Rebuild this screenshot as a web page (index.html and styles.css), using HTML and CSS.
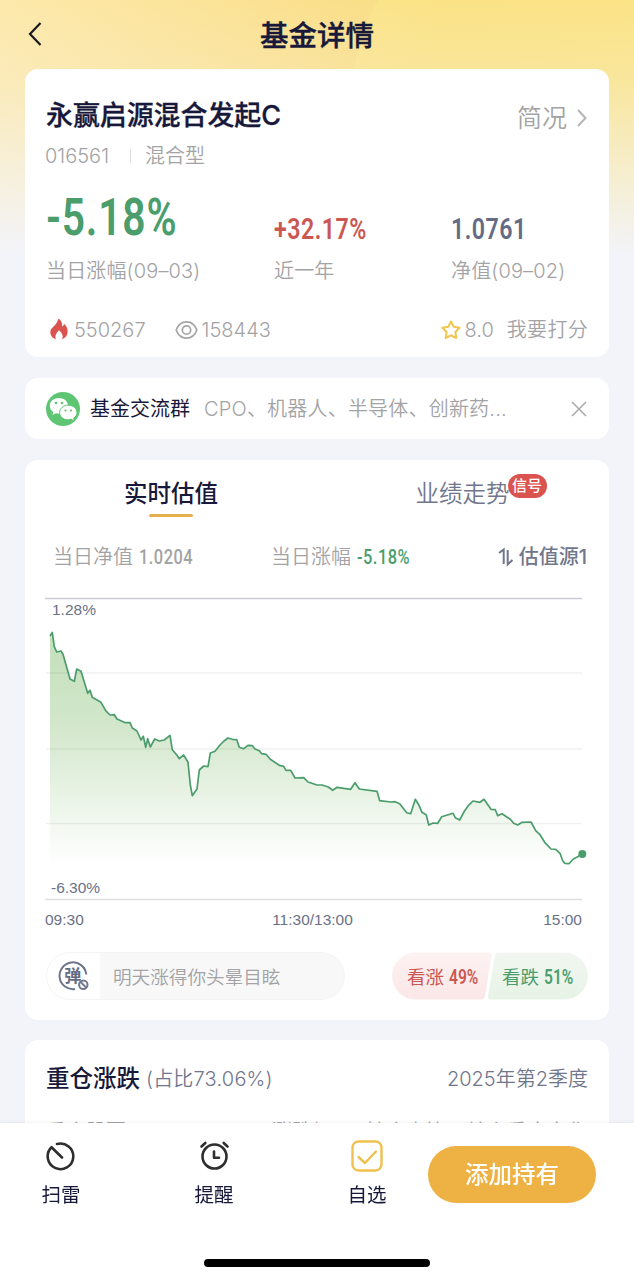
FILE: index.html
```html
<!DOCTYPE html>
<html lang="zh-CN">
<head>
    <meta charset="UTF-8">
    <meta name="viewport" content="width=device-width, initial-scale=1.0">
    <title>基金详情</title>
    <link rel="stylesheet" href="styles.css">
</head>
<body>
<div class="page">
    <header class="header">
        <svg class="back" width="16" height="26" viewBox="0 0 16 26"><path d="M13.5 2 L3 13 L13.5 24"/></svg>
        <h1>基金详情</h1>
    </header>

    <main>
        <section class="card summary">
            <div class="row title-row">
                <h2>永赢启源混合发起C</h2>
                <a class="more">简况
                    <svg width="12" height="20" viewBox="0 0 12 20"><path d="M2 2 L9.5 10 L2 18"/></svg>
                </a>
            </div>
            <div class="meta"><span>016561</span><i></i><span>混合型</span></div>
            <div class="figures">
                <div><strong class="num big green">-5.18%</strong><p>当日涨幅(09–03)</p></div>
                <div><strong class="num red">+32.17%</strong><p>近一年</p></div>
                <div><strong class="num slate">1.0761</strong><p>净值(09–02)</p></div>
            </div>
            <div class="row stats">
                <svg class="fire" width="20" height="22" viewBox="0 0 20 22"><path d="M9.5 0.5 C13 3 13.4 6 13 8.5 C14.4 8 15 7 15 5.8 C18 8.5 19 11.5 18.6 14.5 C18.1 18 16 20.3 13 21.3 C14.6 18.5 13.6 15.5 10 12.3 C7 15.5 5.5 18.5 7 21.3 C3.5 20.2 1.3 17.5 1.3 14 C1.3 9.5 7.5 8 9.5 0.5 Z"/></svg>
                <span class="hot">550267</span>
                <svg class="eye" width="23" height="20" viewBox="0 0 23 20"><path d="M1.2 10 C5 -0.8 18 -0.8 21.8 10 C18 20.8 5 20.8 1.2 10 Z"/><circle cx="11.5" cy="10" r="4.2"/></svg>
                <span>158443</span>
                <svg class="star" width="20" height="20" viewBox="0 0 20 20"><path d="M10 1.5 L12.7 6.8 L18.6 7.8 L14.4 12 L15.3 18 L10 15.3 L4.7 18 L5.6 12 L1.4 7.8 L7.3 6.8 Z"/></svg>
                <span class="score">8.0</span>
                <span class="rate">我要打分</span>
            </div>
        </section>

        <section class="card group">
            <svg class="wechat" width="34" height="34" viewBox="0 0 34 34">
                <circle class="disc" cx="17" cy="17" r="17"/>
                <path class="bubble" d="M13 6 C7.5 6 3.8 9.6 3.8 13.8 C3.8 16.5 5.2 18.7 7.3 20 L6.5 23 L10 21.3 C18 23 22 18.5 22 13.8 C22 9.6 18.3 6 13 6 Z"/>
                <path class="bubble front" d="M22.3 13.2 C17.2 13.2 13.6 16.5 13.6 20.6 C13.6 25.5 18.5 29 25 27.3 L28.3 29 L27.6 26.1 C29.8 24.8 31 22.9 31 20.6 C31 16.5 27.5 13.2 22.3 13.2 Z"/>
                <g class="disc"><circle cx="10" cy="11" r="1.3"/><circle cx="16" cy="11" r="1.3"/><circle cx="19.5" cy="18.5" r="1.1"/><circle cx="25" cy="18.5" r="1.1"/></g>
            </svg>
            <b>基金交流群</b>
            <span>CPO、机器人、半导体、创新药...</span>
            <svg class="close" width="18" height="18" viewBox="0 0 18 18"><path d="M2 2 L16 16 M16 2 L2 16"/></svg>
        </section>

        <section class="card valuation">
            <div class="tabs">
                <div class="tab active">实时估值</div>
                <div class="tab">业绩走势<em>信号</em></div>
            </div>
            <div class="quote">
                <span>当日净值 <b class="num small">1.0204</b></span>
                <span>当日涨幅 <b class="num small green">-5.18%</b></span>
                <span class="source">
                    <svg width="16" height="20" viewBox="0 0 16 20"><path d="M1 6 L5.7 2.5 V17 M9.7 3 V17.5 L14.5 13"/></svg>
                    估值源1
                </span>
            </div>
            <svg class="chart" width="543" height="340" viewBox="46 590 543 340">
                <defs>
                    <linearGradient id="fade" x1="0" y1="632" x2="0" y2="864" gradientUnits="userSpaceOnUse">
                        <stop offset="0" stop-color="#c3dfba"/>
                        <stop offset="0.4" stop-color="#d2e7cb"/>
                        <stop offset="1" stop-color="#ffffff"/>
                    </linearGradient>
                </defs>
                <path class="area" d="M50 864 L50 636 L52.3 632.5 L54.3 646.7 L56.7 652 L61 651 L63 654.3 L70 679 L74.3 681.3 L76.7 669 L81 671.3 L87.7 693.3 L90 690.3 L92.3 697.3 L101 702.3 L105.7 710.7 L110 715 L114.3 714.7 L117 719 L125.3 722.7 L130 722.7 L132.3 728 L137 731 L141 740 L143.3 736.3 L145.7 747.3 L147.7 738.7 L150.3 747 L154.7 739 L159.3 741 L164.3 740 L170 735.3 L172.3 749.7 L177 755.3 L179.3 758.7 L183.7 755 L188 762.3 L190.3 785 L192.3 795.7 L197 789 L199.3 770 L203.7 766 L208 766.7 L210.3 753 L215 751.3 L220 745 L224 741 L228 738 L232.3 739.3 L236.7 739.7 L239.3 747.3 L243.7 748.7 L248 745.3 L252.3 745.7 L255 749 L259.3 750.7 L261.7 753.7 L266 754.3 L270.3 759.3 L279.3 765.3 L283.7 766.3 L286 770.3 L290.7 770.3 L295 778 L303.7 777.7 L308 782 L317 785 L322 785 L328.3 787 L332.7 790.3 L337 787.3 L350.7 789.3 L355 782.7 L359.3 789 L377 791.3 L379.7 800.7 L390.7 802 L395 801.7 L399.7 803.7 L406.7 812.7 L410.7 813.7 L415.3 799.3 L419 805.3 L422 812.3 L426.3 815 L428.7 825 L433 823 L437.7 823.3 L441.7 816.7 L453 813.3 L455.3 817.7 L459.7 820 L464.3 811.3 L468.3 805.7 L473 801 L480 802.3 L484 799.3 L491 809.3 L495.3 809.7 L497.7 815.7 L502 813.7 L510.3 819.3 L513.7 823.3 L517.7 825 L522 822.3 L531 822 L535.7 830.7 L539.7 834.3 L544.7 842.3 L551 849 L555.7 849.3 L560 853.3 L562.7 860.7 L564.7 863.3 Z"/>
                <g class="grid"><path d="M46 673 H582 M46 749 H582 M46 823.5 H582"/></g>
                <path class="edge top" d="M45 598.5 H582"/>
                <path class="edge" d="M45 899.5 H582"/>
                <polyline class="line" points="50,636 52.3,632.5 54.3,646.7 56.7,652 61,651 63,654.3 70,679 74.3,681.3 76.7,669 81,671.3 87.7,693.3 90,690.3 92.3,697.3 101,702.3 105.7,710.7 110,715 114.3,714.7 117,719 125.3,722.7 130,722.7 132.3,728 137,731 141,740 143.3,736.3 145.7,747.3 147.7,738.7 150.3,747 154.7,739 159.3,741 164.3,740 170,735.3 172.3,749.7 177,755.3 179.3,758.7 183.7,755 188,762.3 190.3,785 192.3,795.7 197,789 199.3,770 203.7,766 208,766.7 210.3,753 215,751.3 220,745 224,741 228,738 232.3,739.3 236.7,739.7 239.3,747.3 243.7,748.7 248,745.3 252.3,745.7 255,749 259.3,750.7 261.7,753.7 266,754.3 270.3,759.3 279.3,765.3 283.7,766.3 286,770.3 290.7,770.3 295,778 303.7,777.7 308,782 317,785 322,785 328.3,787 332.7,790.3 337,787.3 350.7,789.3 355,782.7 359.3,789 377,791.3 379.7,800.7 390.7,802 395,801.7 399.7,803.7 406.7,812.7 410.7,813.7 415.3,799.3 419,805.3 422,812.3 426.3,815 428.7,825 433,823 437.7,823.3 441.7,816.7 453,813.3 455.3,817.7 459.7,820 464.3,811.3 468.3,805.7 473,801 480,802.3 484,799.3 491,809.3 495.3,809.7 497.7,815.7 502,813.7 510.3,819.3 513.7,823.3 517.7,825 522,822.3 531,822 535.7,830.7 539.7,834.3 544.7,842.3 551,849 555.7,849.3 560,853.3 562.7,860.7 564.7,863.3 569,863.7 573,859.3 577.7,856.7 582.3,854"/>
                <circle class="dot" cx="582.3" cy="854" r="4"/>
                <text x="52" y="615">1.28%</text>
                <text x="51" y="893">-6.30%</text>
                <text x="45" y="925">09:30</text>
                <text x="312.5" y="925" text-anchor="middle">11:30/13:00</text>
                <text x="582" y="925" text-anchor="end">15:00</text>
            </svg>
            <div class="row vote-row">
                <div class="danmu">
                    <div class="switch">
                        <svg width="34" height="34" viewBox="0 0 34 34">
                            <path d="M29.3 15.5 A13.4 13.4 0 1 0 18 30"/>
                            <circle cx="26.3" cy="25.7" r="4.2"/>
                            <path d="M23.4 22.8 L29.2 28.6"/>
                            <text x="15.7" y="22.5" text-anchor="middle">弹</text>
                        </svg>
                    </div>
                    <span>明天涨得你头晕目眩</span>
                </div>
                <div class="vote">
                    <svg width="197" height="48" viewBox="0 0 197 48">
                        <defs>
                            <linearGradient id="up" x1="0" y1="0" x2="0" y2="1"><stop offset="0" stop-color="#fdf2f2"/><stop offset="1" stop-color="#fbe7e7"/></linearGradient>
                            <linearGradient id="down" x1="0" y1="0" x2="0" y2="1"><stop offset="0" stop-color="#f1f7f0"/><stop offset="1" stop-color="#e7f3e7"/></linearGradient>
                        </defs>
                        <path fill="url(#up)" d="M24.5 0.5 H98 Q101 0.5 100.5 3.5 L94 44 Q93.3 47.5 90 47.5 H24.5 A23.5 23.5 0 0 1 24.5 0.5 Z"/>
                        <path fill="url(#down)" d="M107 0.5 H173.5 A23.5 23.5 0 0 1 173.5 47.5 H100 Q96.5 47.5 97 44 L104 3.5 Q104.5 0.5 107 0.5 Z"/>
                    </svg>
                    <span class="up">看涨 <b class="num small">49%</b></span>
                    <span class="down">看跌 <b class="num small">51%</b></span>
                </div>
            </div>
        </section>

        <section class="card holdings">
            <div class="row">
                <h3>重仓涨跌</h3>
                <span class="ratio">(占比73.06%)</span>
                <span class="quarter">2025年第2季度</span>
            </div>
            <div class="columns"><span>重仓股票</span><span>涨跌幅</span><span>持仓占比</span><span>较上季度变化</span></div>
        </section>
    </main>

    <footer class="toolbar">
        <div class="tool">
            <svg width="32" height="32" viewBox="0 0 32 32"><path d="M12 4 A12.8 12.8 0 1 1 6.5 7.2 L17 17.5"/></svg>
            <span>扫雷</span>
        </div>
        <div class="tool">
            <svg width="32" height="32" viewBox="0 0 32 32"><circle cx="16.5" cy="16.5" r="12"/><path d="M16 11.5 V17.7 H21 M3.5 6.5 L7.3 3 M29.5 6.5 L25.7 3"/></svg>
            <span>提醒</span>
        </div>
        <div class="tool picked">
            <svg width="32" height="32" viewBox="0 0 32 32"><rect x="1.5" y="1.5" width="29" height="29" rx="6"/><path d="M7.5 17 L14 23 L25 11.5"/></svg>
            <span>自选</span>
        </div>
        <button type="button">添加持有</button>
        <div class="home-bar"></div>
    </footer>
</div>
</body>
</html>
```
FILE: styles.css
```css
* {
    box-sizing: border-box;
}

body {
    margin: 0;
    font-family: Inter, "Noto Sans CJK SC", sans-serif;
    font-size: 20px;
    font-weight: 350;
    line-height: 28px;
    color: #a3a3a5;
    background: #f3f4fa;
}

h1, h2, h3, p {
    margin: 0;
}

svg {
    display: block;
    flex: none;
    fill: none;
}

.page {
    height: 1280px;
    overflow: hidden;
    background: linear-gradient(to bottom, rgba(243, 244, 250, 0) 0, rgba(243, 244, 250, 0.2) 80px, rgba(243, 244, 250, 0.65) 180px, #f3f4fa 255px),
        radial-gradient(circle at 525px 90px, rgba(252, 234, 140, 0.45) 0, rgba(252, 234, 140, 0.45) 171px, rgba(252, 234, 140, 0) 173px),
        linear-gradient(100deg, #fde9ab 0%, #f9dc80 52%, #f9df80 100%);
}

.header {
    position: relative;
    height: 69px;
    padding-top: 17px;
    text-align: center;
}

.header h1 {
    font-size: 28.5px;
    line-height: 38px;
    font-weight: 500;
    color: #17183a;
    -webkit-text-stroke: 0.4px #17183a;
}

.back {
    position: absolute;
    left: 27px;
    top: 21px;
    stroke: #1a1a22;
    stroke-width: 2.2;
}

main {
    display: flex;
    flex-direction: column;
    gap: 21px;
    padding: 0 25px;
}

.card {
    background: #fff;
    border-radius: 13px;
    padding: 0 21px;
}

.row {
    display: flex;
    align-items: center;
}

.green {
    color: #4b9d6c;
}

.red {
    color: #cb5752;
}

.slate {
    color: #656b84;
}

/* narrow DIN-like digits */
.num {
    display: inline-block;
    font-family: Roboto, sans-serif;
    font-size: 29px;
    font-weight: 600;
    line-height: 34px;
    letter-spacing: 0.6px;
    transform: scaleX(0.8);
    transform-origin: left center;
}

.num.big {
    font-size: 51px;
    line-height: 50px;
    letter-spacing: 1px;
}

.num.small {
    font-size: 20.5px;
    line-height: 24px;
    font-weight: 500;
}

/* summary */
.summary {
    height: 288px;
}

.title-row {
    justify-content: space-between;
    padding-top: 28px;
}

.title-row h2 {
    font-size: 27px;
    line-height: 38px;
    font-weight: 500;
    color: #17183a;
    letter-spacing: -0.1px;
    -webkit-text-stroke: 0.3px #17183a;
}

.more {
    display: flex;
    align-items: center;
    gap: 9px;
    padding-top: 3px;
    font-size: 25px;
}

.more svg {
    stroke: #b5b5b7;
    stroke-width: 2;
}

.meta {
    display: flex;
    align-items: center;
    margin-top: 7px;
}

.meta span:first-child {
    margin-left: -1px;
}

.meta i {
    width: 1px;
    height: 14px;
    margin: 0 14px 0 21px;
    background: #dcdcde;
}

.figures {
    display: grid;
    grid-template-columns: 228px 177px 1fr;
    align-items: end;
    margin-top: 23px;
}

.figures strong {
    display: block;
    margin-bottom: 11px;
    white-space: nowrap;
}

.figures .big {
    margin-bottom: 14px;
}

.figures p {
    font-size: 20px;
    letter-spacing: 0.15px;
}

.stats {
    margin-top: 31px;
}

.fire {
    margin: -2px 5px 0 3px;
    fill: #d9534f;
}

.eye {
    margin: 0 4px 0 29px;
    stroke: #a5a5a7;
    stroke-width: 1.7;
}

.star {
    margin: 0 4px 0 auto;
    stroke: #efc650;
    stroke-width: 2;
    stroke-linejoin: round;
}

.score {
    margin-right: 13px;
}

.rate {
    letter-spacing: 0.3px;
}

/* chat group */
.group {
    display: flex;
    align-items: center;
    height: 61px;
    padding-top: 1px;
}

.disc {
    fill: #5ec573;
}

.bubble {
    fill: #fff;
}

.front {
    stroke: #5ec573;
    stroke-width: 1;
}

.group b {
    margin: 0 14px 0 10px;
    font-weight: 400;
    color: #17183a;
}

.group span {
    letter-spacing: 0.2px;
}

.close {
    margin-left: auto;
    stroke: #aaaaac;
    stroke-width: 1.5;
}

/* valuation */
.valuation {
    height: 560px;
}

.tabs {
    display: grid;
    grid-template-columns: 250px 1fr;
    height: 58px;
    padding-top: 19px;
}

.tab {
    position: relative;
    justify-self: center;
    font-size: 23.5px;
    line-height: 30px;
    color: #70768c;
}

.tab + .tab {
    margin-left: 41px;
}

.tab.active {
    font-weight: 500;
    color: #17183a;
}

.tab.active::after {
    content: "";
    position: absolute;
    left: 25px;
    bottom: 1px;
    width: 44px;
    height: 3px;
    border-radius: 2px;
    background: #e5b04d;
}

.tab em {
    position: absolute;
    left: 92px;
    top: -5px;
    width: 39px;
    border-radius: 12px;
    background: #db534f;
    color: #fff;
    font-size: 15px;
    font-style: normal;
    font-weight: 500;
    line-height: 24px;
    text-align: center;
}

.quote {
    display: grid;
    grid-template-columns: 218px 1fr auto;
    padding: 25px 1px 0 7px;
}

.quote .source {
    display: flex;
    align-items: center;
    gap: 5px;
    color: #70768c;
    font-weight: 500;
}

.source svg {
    stroke: #70768c;
    stroke-width: 2;
}

.chart {
    margin-top: 19px;
    overflow: visible;
}

.chart .area {
    fill: url(#fade);
}

.chart .line {
    stroke: #4b9d6c;
    stroke-width: 1.7;
    stroke-linejoin: round;
}

.chart .dot {
    fill: #4b9d6c;
}

.chart .grid {
    stroke: rgba(90, 100, 100, 0.09);
    stroke-width: 1.3;
}

.chart .edge {
    stroke: #dfe0e4;
    stroke-width: 1.5;
}

.chart .edge.top {
    stroke: #c9ccd6;
}

.chart text {
    fill: #6b7187;
    font-family: "Liberation Sans", sans-serif;
    font-size: 15.5px;
    font-weight: 400;
}

.vote-row {
    justify-content: space-between;
    margin-top: 22px;
}

.danmu {
    display: flex;
    align-items: center;
    width: 299px;
    height: 48px;
    padding-top: 1px;
    border: 1px solid #f5f5f6;
    border-radius: 24px;
    background: #f8f8f8;
    font-size: 18.6px;
    overflow: hidden;
}

.switch {
    width: 53px;
    height: 48px;
    margin-right: 13px;
    padding: 6px 0 0 10px;
    background: #fff;
}

.switch svg {
    stroke: #70768c;
    stroke-width: 2;
}

.switch text {
    stroke: none;
    fill: #656b84;
    font-size: 17px;
    font-weight: 700;
}

.vote {
    position: relative;
    width: 197px;
    height: 48px;
    font-size: 18.5px;
}

.vote span {
    position: absolute;
    top: 11px;
    white-space: nowrap;
    font-weight: 400;
}

.vote .num {
    font-weight: 600;
    letter-spacing: 0;
    transform: scaleX(0.76);
}

.vote .up {
    left: 16px;
    color: #cb5752;
}

.vote .down {
    left: 111px;
    color: #4b9d6c;
}

/* holdings */
.holdings {
    height: 240px;
    padding-top: 23px;
    margin-top: -1px;
}

.holdings h3 {
    font-size: 23.5px;
    line-height: 32px;
    font-weight: 500;
    color: #17183a;
}

.ratio {
    margin-left: 6px;
    color: #70768c;
    letter-spacing: 0.2px;
}

.quarter {
    margin-left: auto;
    color: #70768c;
}

.columns {
    display: grid;
    grid-template-columns: 226px 94px 101px 1fr;
    margin-top: 23px;
    white-space: nowrap;
}

/* bottom toolbar */
.toolbar {
    position: fixed;
    left: 0;
    bottom: 0;
    display: grid;
    grid-template-columns: 122px 184px 122px 168px;
    align-items: start;
    width: 634px;
    height: 157px;
    background: #fff;
    box-shadow: 0 -1px 3px rgba(0, 0, 0, 0.05);
}

.tool {
    display: flex;
    flex-direction: column;
    align-items: center;
    gap: 9px;
    padding-top: 17px;
    font-size: 19.5px;
    font-weight: 400;
    color: #17183a;
}

.tool svg {
    stroke: #2e2e30;
    stroke-width: 2.6;
    stroke-linecap: round;
    stroke-linejoin: round;
}

.picked svg {
    stroke: #efc04f;
    stroke-width: 2.4;
}

.toolbar button {
    height: 57px;
    margin-top: 23px;
    padding: 1px 0 0;
    border: none;
    border-radius: 29px;
    background: #eeb143;
    color: #fff;
    font: 500 23.5px/56px Inter, "Noto Sans CJK SC", sans-serif;
}

.home-bar {
    position: absolute;
    left: 204px;
    bottom: 13px;
    width: 226px;
    height: 8px;
    border-radius: 4px;
    background: #000;
}
```
